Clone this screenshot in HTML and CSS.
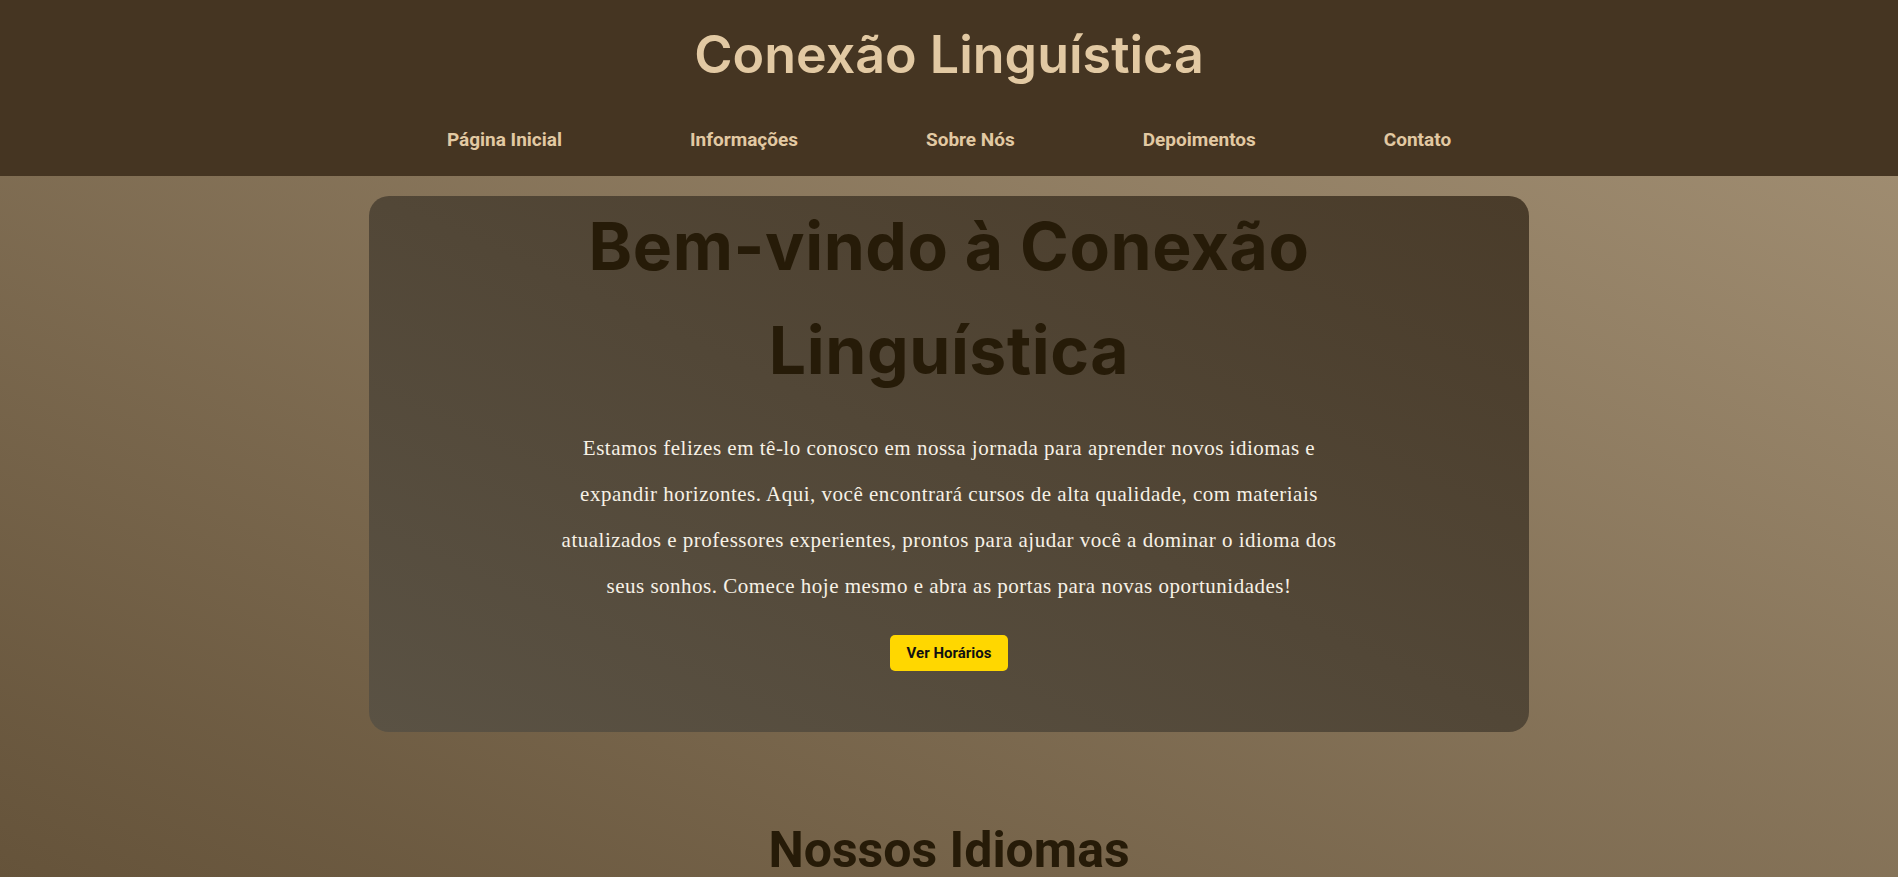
FILE: index.html
```html
<!DOCTYPE html>
<html lang="pt-BR">
<head>
<meta charset="utf-8">
<title>Conexão Linguística</title>
<link rel="stylesheet" href="styles.css">
</head>
<body>
<header class="site-header">
  <h1 class="brand">Conexão Linguística</h1>
  <nav class="nav">
    <a href="#" class="nav-link">Página Inicial</a>
    <a href="#" class="nav-link">Informações</a>
    <a href="#" class="nav-link">Sobre Nós</a>
    <a href="#" class="nav-link">Depoimentos</a>
    <a href="#" class="nav-link">Contato</a>
  </nav>
</header>
<main class="main">
  <section class="hero">
    <h2 class="hero-title">Bem-vindo à Conexão Linguística</h2>
    <p class="hero-text">Estamos felizes em tê-lo conosco em nossa jornada para aprender novos idiomas e expandir horizontes. Aqui, você encontrará cursos de alta qualidade, com materiais atualizados e professores experientes, prontos para ajudar você a dominar o idioma dos seus sonhos. Comece hoje mesmo e abra as portas para novas oportunidades!</p>
    <a href="#" class="btn">Ver Horários</a>
  </section>
  <section class="languages">
    <h2 class="section-title">Nossos Idiomas</h2>
  </section>
</main>
</body>
</html>
```
FILE: styles.css
```css
html {
  background: linear-gradient(to top right, #65533a 0%, #a59276 100%) fixed;
  min-height: 100%;
}
body {
  margin: 0;
  font-family: Roboto, "Liberation Sans", sans-serif;
}
.site-header {
  background: #453522;
  height: 176px;
  box-sizing: border-box;
  padding-top: 22px;
  display: flex;
  flex-direction: column;
  align-items: center;
}
.brand {
  margin: 0;
  font-family: Inter, "Noto Sans", sans-serif;
  font-weight: 600;
  font-size: 52px;
  line-height: 65px;
  color: #e2c9a3;
}
.nav {
  margin-top: 42px;
  display: flex;
  justify-content: center;
  gap: 128px;
}
.nav-link {
  font-family: Roboto, sans-serif;
  font-weight: 700;
  font-size: 19px;
  line-height: 22px;
  color: #e2c9a3;
  text-decoration: none;
}
.main {
  display: flex;
  flex-direction: column;
  align-items: center;
}
.hero {
  margin-top: 20px;
  width: 1160px;
  height: 536px;
  box-sizing: border-box;
  border-radius: 20px;
  background: linear-gradient(to top right, #5a5244, #4a3c2a);
  display: flex;
  flex-direction: column;
  align-items: center;
}
.hero-title {
  margin: -2px 0 0;
  width: 800px;
  text-align: center;
  font-family: Inter, "Noto Sans", sans-serif;
  font-weight: 700;
  font-size: 66px;
  line-height: 104px;
  letter-spacing: 0.6px;
  color: #261b08;
}
.hero-text {
  margin: 23px 0 0;
  width: 800px;
  text-align: center;
  font-family: "Liberation Serif", serif;
  font-size: 21px;
  letter-spacing: 0.5px;
  line-height: 46px;
  color: #f7f1e6;
}
.btn {
  margin-top: 26px;
  background: #ffd700;
  color: #111;
  font-family: Roboto, sans-serif;
  font-weight: 700;
  font-size: 15px;
  line-height: 16px;
  padding: 10px 17px;
  border-radius: 5px;
  text-decoration: none;
}
.languages {
  margin-top: 89px;
}
.section-title {
  margin: 0;
  font-family: Roboto, sans-serif;
  font-weight: 700;
  font-size: 50px;
  line-height: 58px;
  color: #261b08;
  text-align: center;
}
```
